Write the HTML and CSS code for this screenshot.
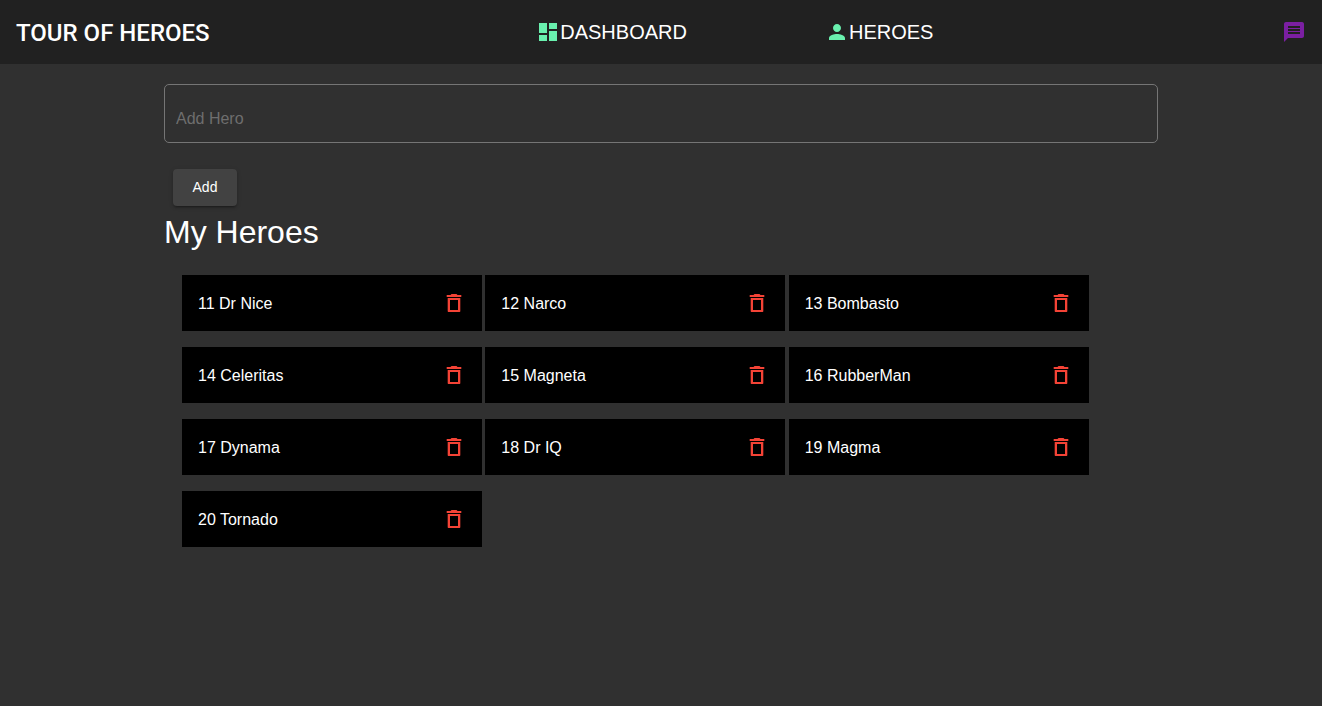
FILE: index.html
```html
<!DOCTYPE html>
<html lang="en">
<head>
<meta charset="utf-8">
<meta name="viewport" content="width=device-width, initial-scale=1">
<title>Tour of Heroes</title>
<link rel="stylesheet" href="styles.css">
</head>
<body>
<svg class="sprite" aria-hidden="true">
  <symbol id="trash" viewBox="0 0 24 24"><path d="M5.700 20.300c0 .4.300.7.700.7h11.200c.4 0 .7-.3.700-.7V7H5.700v13.300zM8 9h8v10H8V9zm7.500-5l-1-1h-5l-1 1H4.700v2h14.600V4h-3.800z"/></symbol>
</svg>
<header class="toolbar">
  <h1 class="brand">TOUR OF HEROES</h1>
  <nav class="nav">
    <a class="nav-link" href="#dashboard"><svg class="icon" viewBox="0 0 24 24" aria-hidden="true"><path d="M3 13h8V3H3v10zm0 8h8v-6H3v6zm10 0h8V11h-8v10zm0-18v6h8V3h-8z"/></svg>DASHBOARD</a>
    <a class="nav-link" href="#heroes"><svg class="icon" viewBox="0 0 24 24" aria-hidden="true"><path d="M12 12c2.210 0 4-1.790 4-4s-1.790-4-4-4-4 1.790-4 4 1.790 4 4 4zm0 2c-2.670 0-8 1.340-8 4v2h16v-2c0-2.660-5.330-4-8-4z"/></svg>HEROES</a>
  </nav>
  <button class="icon-button messages" type="button" aria-label="Messages"><svg class="icon" viewBox="0 0 24 24" aria-hidden="true"><path d="M20 2H4c-1.100 0-1.990.9-1.990 2L2 22l4-4h14c1.100 0 2-.9 2-2V4c0-1.100-.9-2-2-2zm-2 12H6v-2h12v2zm0-3H6V9h12v2zm0-3H6V6h12v2z"/></svg></button>
</header>
<main class="content">
  <form class="add-form">
    <input class="field" type="text" aria-label="Add Hero" placeholder="Add Hero">
    <button class="add-button" type="button">Add</button>
  </form>
  <h2 class="heading">My Heroes</h2>
  <ul class="heroes">
    <li class="hero"><a class="hero-link" href="#11">11 Dr Nice</a><button class="icon-button delete" type="button" aria-label="Delete Dr Nice"><svg class="icon"><use href="#trash"/></svg></button></li>
    <li class="hero"><a class="hero-link" href="#12">12 Narco</a><button class="icon-button delete" type="button" aria-label="Delete Narco"><svg class="icon"><use href="#trash"/></svg></button></li>
    <li class="hero"><a class="hero-link" href="#13">13 Bombasto</a><button class="icon-button delete" type="button" aria-label="Delete Bombasto"><svg class="icon"><use href="#trash"/></svg></button></li>
    <li class="hero"><a class="hero-link" href="#14">14 Celeritas</a><button class="icon-button delete" type="button" aria-label="Delete Celeritas"><svg class="icon"><use href="#trash"/></svg></button></li>
    <li class="hero"><a class="hero-link" href="#15">15 Magneta</a><button class="icon-button delete" type="button" aria-label="Delete Magneta"><svg class="icon"><use href="#trash"/></svg></button></li>
    <li class="hero"><a class="hero-link" href="#16">16 RubberMan</a><button class="icon-button delete" type="button" aria-label="Delete RubberMan"><svg class="icon"><use href="#trash"/></svg></button></li>
    <li class="hero"><a class="hero-link" href="#17">17 Dynama</a><button class="icon-button delete" type="button" aria-label="Delete Dynama"><svg class="icon"><use href="#trash"/></svg></button></li>
    <li class="hero"><a class="hero-link" href="#18">18 Dr IQ</a><button class="icon-button delete" type="button" aria-label="Delete Dr IQ"><svg class="icon"><use href="#trash"/></svg></button></li>
    <li class="hero"><a class="hero-link" href="#19">19 Magma</a><button class="icon-button delete" type="button" aria-label="Delete Magma"><svg class="icon"><use href="#trash"/></svg></button></li>
    <li class="hero"><a class="hero-link" href="#20">20 Tornado</a><button class="icon-button delete" type="button" aria-label="Delete Tornado"><svg class="icon"><use href="#trash"/></svg></button></li>
  </ul>
</main>
</body>
</html>
```
FILE: styles.css
```css
* { box-sizing: border-box; }

body {
  margin: 0;
  background: #303030;
  color: #fff;
  font-family: "Liberation Sans", Arial, sans-serif;
  font-size: 16px;
}

.sprite { display: none; }

.icon {
  display: block;
  width: 24px;
  height: 24px;
  fill: currentColor;
}

.icon-button {
  padding: 0;
  border: 0;
  background: none;
  cursor: pointer;
}

.toolbar {
  display: flex;
  align-items: center;
  min-height: 64px;
  padding: 0 16px;
  background: #212121;
}

.brand {
  margin: 0;
  padding-top: 2px;
  font: 500 24px/32px Roboto, sans-serif;
}

.nav {
  display: flex;
  flex: 1;
  justify-content: center;
  gap: 138px;
  padding-right: 22px;
}

.nav-link {
  display: flex;
  align-items: center;
  color: #fff;
  font-size: 20px;
  line-height: 24px;
  text-decoration: none;
}

.nav-link .icon { color: #69f0ae; }

.messages { color: #7b1fa2; }

.content { padding: 20px 164px; }

.field {
  display: block;
  width: 100%;
  height: 59px;
  padding: 10px 11px 0;
  border: 1px solid #757575;
  border-radius: 5px;
  background: transparent;
  color: #fff;
  font: inherit;
}

.field::placeholder {
  color: #6e6e6e;
  opacity: 1;
}

.add-button {
  display: block;
  min-width: 64px;
  height: 37px;
  margin: 26px 9px 0;
  padding: 0 16px 1px;
  border: 0;
  border-radius: 4px;
  background: #424242;
  box-shadow: 0 3px 1px -2px rgba(0, 0, 0, .2), 0 2px 2px rgba(0, 0, 0, .14), 0 1px 5px rgba(0, 0, 0, .12);
  color: #fff;
  font: 500 14px/34px "Liberation Sans", Arial, sans-serif;
}

.heading {
  margin: 6px 0 23px;
  font-size: 32px;
  font-weight: 400;
  line-height: 40px;
}

.heroes {
  margin: 0;
  padding: 0 18px;
  font-size: 12px;
  list-style: none;
}

.hero {
  display: inline-flex;
  align-items: center;
  justify-content: space-between;
  width: 300px;
  height: 56px;
  margin-bottom: 16px;
  padding: 0 16px;
  background: #000;
  vertical-align: top;
}

.hero-link {
  padding-top: 2px;
  color: #fff;
  font-size: 16px;
  line-height: 18px;
  text-decoration: none;
}

.delete { color: #f44336; }

@media (max-width: 1200px) {
  .content { padding: 20px 24px; }
  .nav { gap: 32px; }
}
```
